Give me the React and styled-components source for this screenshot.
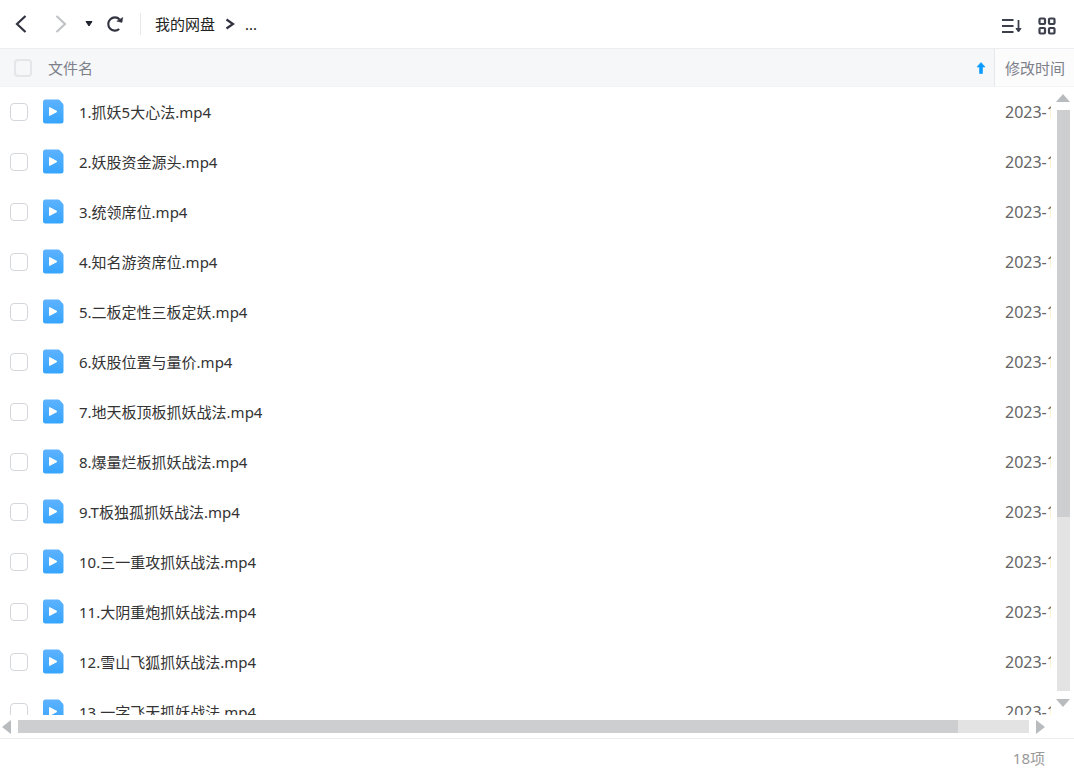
import { useRef } from "react";
import styled, { createGlobalStyle } from "styled-components";

const files = [
	"1.抓妖5大心法.mp4",
	"2.妖股资金源头.mp4",
	"3.统领席位.mp4",
	"4.知名游资席位.mp4",
	"5.二板定性三板定妖.mp4",
	"6.妖股位置与量价.mp4",
	"7.地天板顶板抓妖战法.mp4",
	"8.爆量烂板抓妖战法.mp4",
	"9.T板独孤抓妖战法.mp4",
	"10.三一重攻抓妖战法.mp4",
	"11.大阴重炮抓妖战法.mp4",
	"12.雪山飞狐抓妖战法.mp4",
	"13.一字飞天抓妖战法.mp4",
];

function App() {
	const bodyRef = useRef(null);

	return (
		<Page>
			<GlobalStyle />
			<TopBar>
				<BackButton aria-label="后退">
					<svg width="12" height="18" viewBox="0 0 12 18">
						<path d="M10.500 1 2 9l8.500 8" fill="none" stroke="#30333f" strokeWidth="2.2" />
					</svg>
				</BackButton>
				<ForwardButton aria-label="前进">
					<svg width="12" height="18" viewBox="0 0 12 18">
						<path d="m1.500 1 8.500 8-8.500 8" fill="none" stroke="#c2c3c6" strokeWidth="2.2" />
					</svg>
				</ForwardButton>
				<HistoryButton aria-label="历史记录">
					<svg width="8" height="6" viewBox="0 0 8 6">
						<path d="M1 .5h6L4 5z" fill="#20242f" stroke="#20242f" strokeLinejoin="round" />
					</svg>
				</HistoryButton>
				<RefreshButton aria-label="刷新">
					<svg width="18" height="18" viewBox="0 0 18 18">
						<path d="M13.2 14A6.600 6.600 0 1 1 13.600 4.400" fill="none" stroke="#30333f" strokeWidth="2.1" />
						<path d="M16.800 2.400 16 7.400l-5.200-1.200z" fill="#30333f" stroke="#30333f" strokeWidth=".5" />
					</svg>
				</RefreshButton>
				<Breadcrumb aria-label="路径">
					<Crumb href="#root">我的网盘</Crumb>
					<svg width="10" height="12" viewBox="0 0 10 12">
						<path d="m1.500 1.500 6.500 4.500-6.500 4.500" fill="none" stroke="#30333f" strokeWidth="2.2" />
					</svg>
					<Crumb href="#more">...</Crumb>
				</Breadcrumb>
				<ViewActions>
					<IconButton aria-label="排序">
						<svg width="20" height="16" viewBox="0 0 20 16" fill="none" stroke="#3c404c" strokeWidth="2">
							<path d="M0 2h11.500M0 8h11.500M0 14h11.500" />
							<path d="M16.500 2v10" strokeWidth="1.800" />
							<path d="M14 10.500h5l-2.500 3.500z" fill="#3c404c" strokeWidth="1" />
						</svg>
					</IconButton>
					<IconButton aria-label="网格视图">
						<svg width="18" height="18" viewBox="0 0 18 18" fill="none" stroke="#3c404c" strokeWidth="2.200">
							<rect x="1.500" y="1.500" width="5.500" height="5.500" rx="1" />
							<rect x="11" y="1.500" width="5.500" height="5.500" rx="1" />
							<rect x="1.500" y="11" width="5.500" height="5.500" rx="1" />
							<rect x="11" y="11" width="5.500" height="5.500" rx="1" />
						</svg>
					</IconButton>
				</ViewActions>
			</TopBar>
			<Listing>
				<Table>
					<Head>
						<HeadRow>
							<HeadCell>
								<Checkbox type="checkbox" aria-label="全选" />
								文件名
								<SortIcon width="10" height="12" viewBox="0 0 10 12">
									<path
										d="M5 .5 9 5H6.500v6.500h-3V5H1z"
										fill="#0a9bff"
										stroke="#0a9bff"
										strokeWidth=".6"
										strokeLinejoin="round"
									/>
								</SortIcon>
							</HeadCell>
							<TimeHeadCell>修改时间</TimeHeadCell>
						</HeadRow>
					</Head>
					<Body ref={bodyRef}>
						{files.map((name) => (
							<Row key={name}>
								<NameCell>
									<Checkbox type="checkbox" aria-label={name} />
									<VideoIcon />
									{name}
								</NameCell>
								<TimeCell>2023-1</TimeCell>
							</Row>
						))}
					</Body>
				</Table>
				<VerticalScroll>
					<ArrowButton aria-label="向上滚动" onClick={() => scrollBody(0, -50)}>
						<svg width="14" height="8" viewBox="0 0 14 8">
							<path d="M7 0l7 8H0z" fill="#b9bcbf" />
						</svg>
					</ArrowButton>
					<VerticalTrack>
						<VerticalThumb />
					</VerticalTrack>
					<ArrowButton aria-label="向下滚动" onClick={() => scrollBody(0, 50)}>
						<svg width="14" height="8" viewBox="0 0 14 8">
							<path d="M7 8l7-8H0z" fill="#b9bcbf" />
						</svg>
					</ArrowButton>
				</VerticalScroll>
				<HorizontalScroll>
					<ArrowButton aria-label="向左滚动" onClick={() => scrollBody(-50, 0)}>
						<svg width="9" height="14" viewBox="0 0 9 14">
							<path d="M0 7l9-7v14z" fill="#b9bcbf" />
						</svg>
					</ArrowButton>
					<HorizontalTrack>
						<HorizontalThumb />
					</HorizontalTrack>
					<ArrowButton aria-label="向右滚动" onClick={() => scrollBody(50, 0)}>
						<svg width="9" height="14" viewBox="0 0 9 14">
							<path d="M9 7L0 0v14z" fill="#b9bcbf" />
						</svg>
					</ArrowButton>
				</HorizontalScroll>
			</Listing>
			<Footer>18项</Footer>
		</Page>
	);

	function scrollBody(left, top) {
		bodyRef.current.scrollBy({ left, top });
	}
}

function VideoIcon() {
	return (
		<svg width="21" height="26" viewBox="0 0 21 26">
			<defs>
				<linearGradient id="video" x1="0" y1="0" x2="0" y2="1">
					<stop offset="0" stopColor="#5db2ff" />
					<stop offset="1" stopColor="#36a5fd" />
				</linearGradient>
			</defs>
			<path
				d="M2.500.5h12.700q.8 0 1.400.6l3.200 3.500q.7.7.7 1.600V22a2.500 2.500 0 0 1-2.500 2.500H2.500A2.500 2.500 0 0 1 0 22V3A2.500 2.500 0 0 1 2.500.5z"
				fill="url(#video)"
			/>
			<path d="M6.500 8.500v8l7.500-4z" fill="#fff" stroke="#fff" strokeLinejoin="round" />
		</svg>
	);
}

export default App;

const GlobalStyle = createGlobalStyle`
	* {
		box-sizing: border-box;
	}

	body {
		margin: 0;
		background-color: #fff;
		font-family: "Noto Sans", "Noto Sans CJK SC", sans-serif;
		font-size: 15px;
		line-height: 20px;
		color: #333;
	}

	button {
		display: flex;
		padding: 0;
		border: none;
		background: none;
		cursor: pointer;
	}

	svg {
		display: block;
		flex-shrink: 0;
	}
`;

const Page = styled.div`
	height: 100vh;
	display: flex;
	flex-direction: column;
`;

const TopBar = styled.header`
	height: 49px;
	padding: 0 18px 0 15px;
	border-bottom: 1px solid #ebedf0;
	display: flex;
	align-items: center;
`;

const IconButton = styled.button``;

const BackButton = styled(IconButton)`
	margin-right: 28px;
`;

const ForwardButton = styled(IconButton)`
	margin-right: 18px;
`;

const HistoryButton = styled(IconButton)`
	margin-right: 13px;
`;

const RefreshButton = styled(IconButton)`
	margin-right: 16px;
`;

const Breadcrumb = styled.nav`
	height: 22px;
	padding-left: 14px;
	border-left: 1px solid #e6e7ea;
	display: flex;
	align-items: center;
	gap: 10px;
`;

const Crumb = styled.a`
	color: #222;
	text-decoration: none;
`;

const ViewActions = styled.div`
	margin-left: auto;
	padding-top: 3px;
	display: flex;
	align-items: center;
	gap: 16px;
`;

const Listing = styled.main`
	flex: 1;
	min-height: 0;
	display: grid;
	grid-template-columns: minmax(0, 1fr) 23px;
	grid-template-rows: 38px minmax(0, 1fr) 23px;
`;

const Table = styled.table`
	display: contents;
`;

const Head = styled.thead`
	grid-column: 1 / 3;
	display: grid;
	background-color: #f6f7f9;
	border-bottom: 1px solid #f3f4f6;
`;

const HeadRow = styled.tr`
	display: grid;
	grid-template-columns: minmax(0, 1fr) 80px;
`;

const HeadCell = styled.th`
	padding: 0 8px 0 14px;
	display: flex;
	align-items: center;
	gap: 16px;
	font-weight: 400;
	color: #7d8089;
`;

const TimeHeadCell = styled(HeadCell)`
	padding: 0 0 0 10px;
	border-left: 1px solid #e6e8eb;
	background-color: #fcfcfd;
`;

const SortIcon = styled.svg`
	margin-left: auto;
`;

const Body = styled.tbody`
	display: block;
	overflow: auto;
	scrollbar-width: none;
`;

const Row = styled.tr`
	height: 50px;
	display: grid;
	grid-template-columns: minmax(0, 1fr) 56px;
`;

const NameCell = styled.td`
	padding: 0 0 0 10px;
	display: flex;
	align-items: center;
	gap: 15px;
	white-space: nowrap;
`;

const TimeCell = styled.td`
	padding: 0 0 0 10px;
	display: flex;
	align-items: center;
	overflow: hidden;
	white-space: nowrap;
	font-size: 16px;
	color: #666;
`;

const Checkbox = styled.input`
	appearance: none;
	width: 18px;
	height: 18px;
	margin: 0;
	flex-shrink: 0;
	border: 1px solid #d3d6da;
	border-radius: 4px;

	${HeadCell} & {
		border: 2px solid #e4e6e9;
	}

	&:checked {
		border-color: #36a5fd;
		background-color: #36a5fd;
	}
`;

const ArrowButton = styled(IconButton)`
	flex-shrink: 0;
`;

const VerticalScroll = styled.div`
	padding: 7px 0 8px 1px;
	display: flex;
	flex-direction: column;
	align-items: center;
	gap: 8px;
`;

const VerticalTrack = styled.div`
	flex: 1;
	width: 13px;
	background-color: #e3e3e3;
`;

const VerticalThumb = styled.div`
	height: 70%;
	background-color: #cdced0;
`;

const HorizontalScroll = styled.div`
	grid-column: 1 / 3;
	padding: 0 29px 0 2px;
	display: flex;
	align-items: center;
	gap: 7px;
`;

const HorizontalTrack = styled.div`
	flex: 1;
	height: 13px;
	background-color: #e3e3e3;
`;

const HorizontalThumb = styled.div`
	width: 93%;
	height: 100%;
	background-color: #cdced0;
`;

const Footer = styled.footer`
	height: 32px;
	padding: 6px 29px 0;
	border-top: 1px solid #ebedf0;
	display: flex;
	align-items: center;
	justify-content: flex-end;
	color: #999;
`;
